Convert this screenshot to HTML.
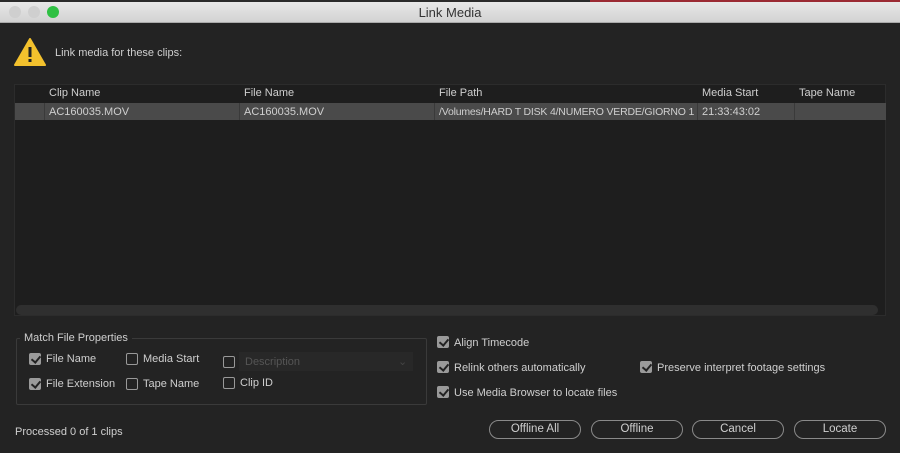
<!DOCTYPE html>
<html><head><style>
*{margin:0;padding:0;box-sizing:border-box}
body{width:900px;height:453px;background:#232323;font-family:"Liberation Sans",sans-serif;font-size:11px;color:#c8c8c8;position:relative;overflow:hidden}
.abs{position:absolute}
.title{left:0;top:2px;width:900px;height:21px;background:linear-gradient(#e8e8e8,#d2d2d2);border-bottom:1px solid #aaa;text-align:center;color:#333;font-size:13px;line-height:21px}
.dot{width:12px;height:12px;border-radius:50%;top:6px}
.cb{width:12px;height:12px;border:1px solid #999;border-radius:2px;background:#232323}
.cb.on{background:#9a9a9a;border-color:#9a9a9a}
.cb.on::after{content:"";position:absolute;left:3px;top:0px;width:4px;height:7px;border:solid #222;border-width:0 2px 2px 0;transform:rotate(40deg)}
.lbl{font-size:11px;color:#cfcfcf;white-space:nowrap}
.btn{top:420px;width:92px;height:19px;border:1.5px solid #8a8a8a;border-radius:10px;text-align:center;line-height:17px;font-size:11.5px;color:#d0d0d0}
</style></head><body>
<div class="abs" style="left:0;top:0;width:900px;height:2px;background:#2a2a2a"></div>
<div class="abs" style="left:590px;top:0;width:310px;height:2px;background:#9b2a33"></div>
<div class="abs title">Link Media</div>
<div class="abs dot" style="left:9px;background:#cfcfcf"></div>
<div class="abs dot" style="left:28px;background:#cfcfcf"></div>
<div class="abs dot" style="left:47px;background:#2fc043"></div>
<svg class="abs" style="left:14px;top:37px" width="32" height="30"><polygon points="16,2 31,28 1,28" fill="#f3c12d" stroke="#f3c12d" stroke-width="2" stroke-linejoin="round"/><rect x="14.5" y="10" width="3" height="10" fill="#222"/><rect x="14.5" y="22" width="3" height="3" fill="#222"/></svg>
<div class="abs lbl" style="left:55px;top:47px">Link media for these clips:</div>
<div class="abs" style="left:14px;top:84px;width:872px;height:232px;background:#1e1e1e;border:1px solid #2c2c2c"></div>
<div class="abs lbl" style="left:49px;top:87px">Clip Name</div>
<div class="abs lbl" style="left:244px;top:87px">File Name</div>
<div class="abs lbl" style="left:439px;top:87px">File Path</div>
<div class="abs lbl" style="left:702px;top:87px">Media Start</div>
<div class="abs lbl" style="left:799px;top:87px">Tape Name</div>
<div class="abs" style="left:15px;top:103px;width:871px;height:17px;background:#4a4a4a"></div>
<div class="abs" style="left:44px;top:103px;width:1px;height:17px;background:#3a3a3a"></div>
<div class="abs" style="left:239px;top:103px;width:1px;height:17px;background:#3a3a3a"></div>
<div class="abs" style="left:434px;top:103px;width:1px;height:17px;background:#3a3a3a"></div>
<div class="abs" style="left:697px;top:103px;width:1px;height:17px;background:#3a3a3a"></div>
<div class="abs" style="left:794px;top:103px;width:1px;height:17px;background:#3a3a3a"></div>
<div class="abs lbl" style="left:49px;top:106px">AC160035.MOV</div>
<div class="abs lbl" style="left:244px;top:106px">AC160035.MOV</div>
<div class="abs lbl" style="left:439px;top:106px;width:257px;overflow:hidden;font-size:10.5px;letter-spacing:-0.2px">/Volumes/HARD T DISK 4/NUMERO VERDE/GIORNO 1</div>
<div class="abs lbl" style="left:702px;top:106px">21:33:43:02</div>
<div class="abs" style="left:16px;top:305px;width:862px;height:10px;background:#2f2f2f;border-radius:5px"></div>
<div class="abs" style="left:16px;top:338px;width:411px;height:67px;border:1px solid #3a3a3a;border-radius:2px"></div>
<div class="abs lbl" style="left:20px;top:332px;background:#232323;padding:0 4px;font-size:11px">Match File Properties</div>
<div class="abs cb on" style="left:29px;top:353px"></div><div class="abs lbl" style="left:46px;top:353px">File Name</div>
<div class="abs cb on" style="left:29px;top:378px"></div><div class="abs lbl" style="left:46px;top:378px">File Extension</div>
<div class="abs cb" style="left:126px;top:353px"></div><div class="abs lbl" style="left:143px;top:353px">Media Start</div>
<div class="abs cb" style="left:126px;top:378px"></div><div class="abs lbl" style="left:143px;top:378px">Tape Name</div>
<div class="abs cb" style="left:223px;top:356px"></div>
<div class="abs" style="left:239px;top:352px;width:174px;height:19px;background:#282828"></div>
<div class="abs lbl" style="left:245px;top:356px;color:#555">Description</div>
<div class="abs lbl" style="left:398px;top:355px;color:#444">⌄</div>
<div class="abs cb" style="left:223px;top:377px"></div><div class="abs lbl" style="left:240px;top:377px">Clip ID</div>
<div class="abs cb on" style="left:437px;top:336px"></div><div class="abs lbl" style="left:454px;top:337px">Align Timecode</div>
<div class="abs cb on" style="left:437px;top:361px"></div><div class="abs lbl" style="left:454px;top:362px">Relink others automatically</div>
<div class="abs cb on" style="left:437px;top:386px"></div><div class="abs lbl" style="left:454px;top:387px">Use Media Browser to locate files</div>
<div class="abs cb on" style="left:640px;top:361px"></div><div class="abs lbl" style="left:657px;top:362px">Preserve interpret footage settings</div>
<div class="abs lbl" style="left:15px;top:426px">Processed 0 of 1 clips</div>
<div class="abs btn" style="left:489px">Offline All</div>
<div class="abs btn" style="left:591px">Offline</div>
<div class="abs btn" style="left:692px">Cancel</div>
<div class="abs btn" style="left:794px">Locate</div>
</body></html>
